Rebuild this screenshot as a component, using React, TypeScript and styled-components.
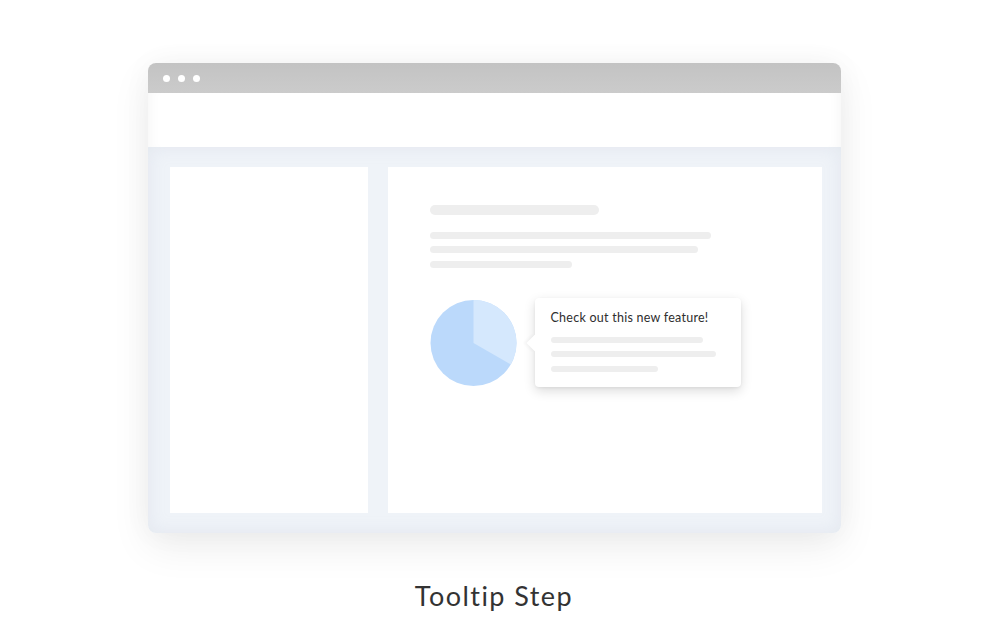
import React from "react";
import styled, { createGlobalStyle } from "styled-components";

const Global = createGlobalStyle`
  html, body { margin: 0; padding: 0; background: #ffffff; }
  body { font-family: "Lato", "Open Sans", sans-serif; }
`;

const Page = styled.div`
  width: 991px;
  height: 622px;
  display: flex;
  flex-direction: column;
  align-items: center;
  padding-top: 63px;
  box-sizing: border-box;
  overflow: hidden;
`;

const Window = styled.div`
  width: 693px;
  height: 470px;
  margin-left: -3px;
  border-radius: 8px;
  display: flex;
  flex-direction: column;
  box-shadow: 0 14px 40px rgba(0, 0, 0, 0.07), 0 0 30px rgba(0, 0, 0, 0.04);
  overflow: hidden;
`;

const TitleBar = styled.div`
  height: 30px;
  background: linear-gradient(#c3c3c3, #cbcbcb);
  display: flex;
  align-items: center;
  gap: 8px;
  padding-left: 15px;
  flex-shrink: 0;
`;

const Dot = styled.span`
  width: 7px;
  height: 7px;
  border-radius: 50%;
  background: #ffffff;
`;

const Header = styled.div`
  height: 54px;
  background: #ffffff;
  flex-shrink: 0;
  box-shadow: inset 10px 0 14px -10px rgba(0, 0, 0, 0.05), inset -10px 0 14px -10px rgba(0, 0, 0, 0.05);
`;

const Body = styled.div`
  flex: 1;
  background: #eff3f8;
  display: flex;
  gap: 20px;
  padding: 20px 19px 20px 22px;
  box-shadow: inset 0 0 18px rgba(160, 170, 190, 0.16);
`;

const Sidebar = styled.div`
  width: 198px;
  background: #ffffff;
`;

const Main = styled.div`
  flex: 1;
  background: #ffffff;
  padding: 38px 0 0 42px;
  display: flex;
  flex-direction: column;
`;

const Bar = styled.div<{ $w: number; $h: number; $mt: number }>`
  width: ${(p) => p.$w}px;
  height: ${(p) => p.$h}px;
  margin-top: ${(p) => p.$mt}px;
  border-radius: ${(p) => p.$h / 2}px;
  background: #eeeeee;
`;

const ChartRow = styled.div`
  display: flex;
  align-items: center;
  margin-top: 31px;
  gap: 18px;
`;

const Tooltip = styled.div`
  position: relative;
  width: 206px;
  height: 89px;
  box-sizing: border-box;
  background: #ffffff;
  border-radius: 4px;
  padding: 12px 16px 0 16px;
  box-shadow: 0 4px 12px rgba(0, 0, 0, 0.14), 0 1px 3px rgba(0, 0, 0, 0.06);
  display: flex;
  flex-direction: column;
  margin-top: -1px;
  &::before {
    content: "";
    position: absolute;
    left: -6px;
    top: 39px;
    width: 12px;
    height: 12px;
    background: #ffffff;
    transform: rotate(45deg);
    box-shadow: -2px 2px 3px rgba(0, 0, 0, 0.04);
  }
`;

const TipText = styled.div`
  font-family: "Lato", "Open Sans", sans-serif;
  font-size: 12.5px;
  line-height: 16px;
  color: #2e2e2e;
  letter-spacing: 0.25px;
  position: relative;
`;

const Caption = styled.div`
  margin-top: 47px;
  font-family: "Lato", "Open Sans", sans-serif;
  font-size: 27px;
  line-height: 32px;
  color: #333333;
  letter-spacing: 1.45px;
  margin-left: -3px;
`;

const Pie = () => (
  <svg width="87" height="88" viewBox="0 0 88 88">
    <circle cx="44" cy="44" r="43.5" fill="#bbd9fb" />
    <path d="M44 44 L44 0.5 A43.5 43.5 0 0 1 81.7 65.7 Z" fill="#d5e8fd" />
  </svg>
);

export default function App() {
  return (
    <>
      <Global />
      <Page>
        <Window>
          <TitleBar>
            <Dot />
            <Dot />
            <Dot />
          </TitleBar>
          <Header />
          <Body>
            <Sidebar />
            <Main>
              <Bar $w={169} $h={10} $mt={0} />
              <Bar $w={281} $h={7} $mt={17} />
              <Bar $w={268} $h={7} $mt={7} />
              <Bar $w={142} $h={7} $mt={8} />
              <ChartRow>
                <Pie />
                <Tooltip>
                  <TipText>Check out this new feature!</TipText>
                  <Bar $w={152} $h={6} $mt={11} />
                  <Bar $w={165} $h={6} $mt={8} />
                  <Bar $w={107} $h={6} $mt={9} />
                </Tooltip>
              </ChartRow>
            </Main>
          </Body>
        </Window>
        <Caption>Tooltip Step</Caption>
      </Page>
    </>
  );
}
